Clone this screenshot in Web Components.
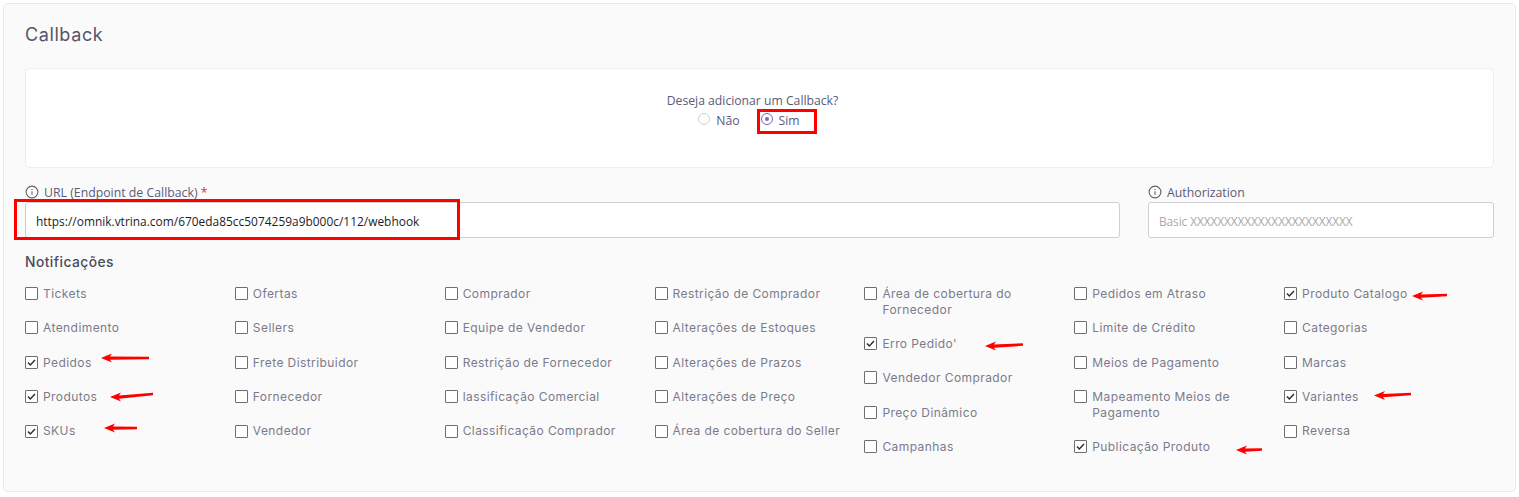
<!DOCTYPE html>
<html lang="pt"><head><meta charset="utf-8"><title>Callback</title>
<style>
html,body{margin:0;padding:0;background:#fff}
body{font-family:"Open Sans","Liberation Sans",sans-serif}
</style></head>
<body>
<callback-panel></callback-panel>
<script>
const INFO=`<svg width="14" height="14" viewBox="0 0 14 14" fill="none" stroke="#5f5f68" stroke-width="1.1"><circle cx="7" cy="7" r="5.9"/><path d="M7 6.2v3.6M7 4.1v1"/></svg>`;
class XField extends HTMLElement{
  connectedCallback(){
    const s=this.attachShadow({mode:'open'});
    const v=this.getAttribute('value'),ph=this.getAttribute('placeholder'),req=this.hasAttribute('required');
    s.innerHTML=`<style>
    :host{display:block;font-family:"Open Sans","Liberation Sans",sans-serif}
    .l{display:flex;align-items:center;gap:5px;height:18px;font-size:12.3px;color:#5a5a78;margin-bottom:1px}
    .l b{font-weight:400;color:#e0303a}
    .i{box-sizing:border-box;height:36px;background:#fff;border:1px solid #cfcfd2;border-radius:3px;padding:1px 10px 0;display:flex;align-items:center;font-size:11.9px;letter-spacing:${v?'.02px':'-.1px'};color:${v?'#1c1c28':'#a8a8ac'}}
    </style><div class="l">${INFO}<span>${this.getAttribute('label')}${req?' <b>*</b>':''}</span></div><div class="i">${v||ph}</div>`;
  }
}
class XCheck extends HTMLElement{
  connectedCallback(){
    const s=this.attachShadow({mode:'open'});
    const on=this.hasAttribute('checked');
    s.innerHTML=`<style>
    :host{display:flex;align-items:flex-start;gap:5px;min-height:17.2px;margin-bottom:17.2px;font:400 12px/16.4px Inter,"Liberation Sans",sans-serif;letter-spacing:.42px;color:#7a7a8c}
    .b{flex:none;box-sizing:border-box;width:13px;height:13px;margin-top:2px;border:1px solid #6e6e6e;background:#fff;border-radius:1px;display:block}
    svg{display:block}
    span{padding-right:12px;margin:.8px 0 -.8px}
    </style><div class="b">${on?'<svg width="11" height="11" viewBox="0 0 11 11" fill="none" stroke="#2a2a2a" stroke-width="1.4"><path d="M2 5.6l2.3 2.3L9 3"/></svg>':''}</div><span><slot></slot></span>`;
  }
}
class XRadio extends HTMLElement{
  connectedCallback(){
    const s=this.attachShadow({mode:'open'});
    const on=this.hasAttribute('checked');
    s.innerHTML=`<style>
    :host{display:inline-flex;align-items:center;gap:6px;font-size:12.2px;line-height:17px;color:#5a5a78}
    i{display:block;box-sizing:border-box;width:12px;height:12px;margin-top:-4px;border-radius:50%;background:#fff;border:1px solid ${on?'#7a68b0':'#cfcfd2'};position:relative}
    i::after{content:"";display:${on?'block':'none'};position:absolute;left:3px;top:3px;width:4px;height:4px;border-radius:50%;background:#7a68b0}
    </style><i></i><slot></slot>`;
  }
}
class CallbackPanel extends HTMLElement{
  connectedCallback(){
    const s=this.attachShadow({mode:'open'});
    const cols=[
     [['Tickets'],['Atendimento'],['Pedidos',1],['Produtos',1],['SKUs',1]],
     [['Ofertas'],['Sellers'],['Frete Distribuidor'],['Fornecedor'],['Vendedor']],
     [['Comprador'],['Equipe de Vendedor'],['Restrição de Fornecedor'],['lassificação Comercial'],['Classificação Comprador']],
     [['Restrição de Comprador'],['Alterações de Estoques'],['Alterações de Prazos'],['Alterações de Preço'],['Área de cobertura do Seller']],
     [['Área de cobertura do Fornecedor'],["Erro Pedido'",1],['Vendedor Comprador'],['Preço Dinâmico'],['Campanhas']],
     [['Pedidos em Atraso'],['Limite de Crédito'],['Meios de Pagamento'],['Mapeamento Meios de Pagamento'],['Publicação Produto',1]],
     [['Produto Catalogo',1],['Categorias'],['Marcas'],['Variantes',1],['Reversa']]
    ];
    const arrows=[[101,358,149,358],[110,397,153,394],[104,428,137,428],[985,346,1023,344.5],[1236,450,1262,449.5],[1374,395.5,1411,394],[1412,296,1447,295]];
    s.innerHTML=`<style>
    :host{display:block;box-sizing:border-box;width:1519px;height:497px;padding:3px 3px 5px;position:relative;font-family:"Open Sans","Liberation Sans",sans-serif}
    .card{box-sizing:border-box;height:100%;background:#fafafa;border:1px solid #e8e8e8;border-radius:5px;padding:20px 21px 0}
    h2{margin:0;font:400 18px/22px Inter,"Liberation Sans",sans-serif;letter-spacing:.6px;color:#55556a}
    .q{box-sizing:border-box;height:100px;margin-top:22px;background:#fff;border:1px solid #ececec;border-radius:5px;display:flex;flex-direction:column;align-items:center;padding:23px 14px 0 0;font-size:12.2px;line-height:17px;color:#5a5a78}
    .rs{display:flex;gap:21px;margin:3px 7px 0 0}
    .fields{display:grid;grid-template-columns:1095px 346px;column-gap:28px;margin-top:15px}
    h3{margin:14px 0 0;font:500 13.8px/20px Inter,"Liberation Sans",sans-serif;letter-spacing:.45px;color:#4a4a5a}
    .grid{display:grid;grid-template-columns:repeat(7,209.85px);margin-top:13px}
    .box{position:absolute;border:3px solid #f00;box-sizing:border-box}
    .arr{position:absolute;left:0;top:0}
    </style>
    <div class="card">
      <h2>Callback</h2>
      <div class="q"><div>Deseja adicionar um Callback?</div><div class="rs"><x-radio>Não</x-radio><x-radio checked>Sim</x-radio></div></div>
      <div class="fields">
        <x-field label="URL (Endpoint de Callback)" required value="https://omnik.vtrina.com/670eda85cc5074259a9b000c/112/webhook"></x-field>
        <x-field label="Authorization" placeholder="Basic XXXXXXXXXXXXXXXXXXXXXXXX"></x-field>
      </div>
      <h3>Notificações</h3>
      <div class="grid">${cols.map(c=>`<div>${c.map(([t,on])=>`<x-check${on?' checked':''}>${t}</x-check>`).join('')}</div>`).join('')}</div>
    </div>
    <div class="box" style="left:757px;top:109px;width:60px;height:25px"></div>
    <div class="box" style="left:14px;top:199px;width:446px;height:41px"></div>
    <svg class="arr" width="1519" height="497" fill="#f00" aria-hidden="true">${arrows.map(([x1,y1,x2,y2])=>`<path d="M${x1} ${y1}L${x1+11} ${y1-4.5}L${x1+9} ${y1-1.6}L${x2} ${y2-1.3}L${x2} ${y2+1.3}L${x1+9} ${y1+1.8}L${x1+11} ${y1+4.5}Z"/>`).join('')}</svg>`;
  }
}
customElements.define('x-field',XField);
customElements.define('x-check',XCheck);
customElements.define('x-radio',XRadio);
customElements.define('callback-panel',CallbackPanel);
</script>
</body></html>
